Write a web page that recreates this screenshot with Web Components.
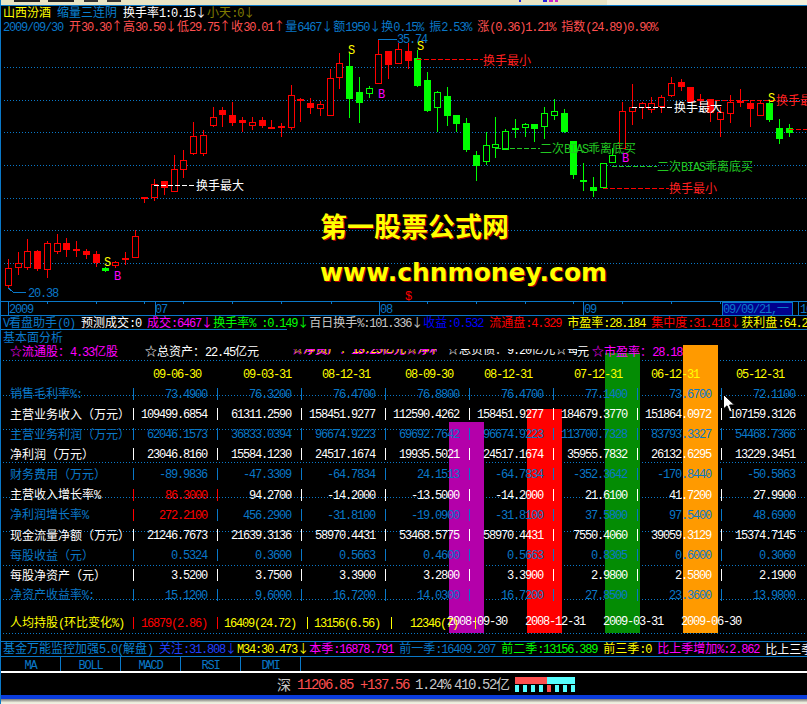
<!DOCTYPE html>
<html lang="zh">
<head>
<meta charset="utf-8">
<title>山西汾酒</title>
<style>
  html, body { margin: 0; background: #000; }
</style>
</head>
<body>
<tdx-app>
  <top-strip></top-strip>
  <kline-chart>
    <tick-bar>
      <tick-run color="#ffff00">山西汾酒 </tick-run>
      <tick-run color="#0a82d2">缩量三连阴 </tick-run>
      <tick-run color="#ffffff">换手率1:0.15↓</tick-run>
      <tick-run color="#807c00">小天:0↓</tick-run>
    </tick-bar>
    <tick-bar>
      <tick-run color="#0a78c8">2009/09/30 </tick-run>
      <tick-run color="#ff5050">开30.30↑高30.50↓低29.75↑收30.01↑</tick-run>
      <tick-run color="#0a78c8">量6467↓额1950↓换0.15% 振2.53% </tick-run>
      <tick-run color="#ff5050">涨(0.36)1.21% 指数(24.89)0.90%</tick-run>
    </tick-bar>
  </kline-chart>
  <tick-bar style="height:13px">
    <tick-run color="#0a78c8">V看盘助手(0) </tick-run>
    <tick-run color="#ffffff">预测成交:0 </tick-run>
    <tick-run color="#ff00ff">成交:6467↓</tick-run>
    <tick-run color="#00ff00">换手率% :0.149↓</tick-run>
    <tick-run color="#c8c8c8">百日换手%:101.336↓</tick-run>
    <tick-run color="#0000ff">收益:0.532 </tick-run>
    <tick-run color="#ff0000">流通盘:4.329 </tick-run>
    <tick-run color="#ffff00">市盈率:28.184 </tick-run>
    <tick-run color="#ff0000">集中度:31.418↓</tick-run>
    <tick-run color="#ffff00">获利盘:64.2</tick-run>
  </tick-bar>
  <split-rule></split-rule>
  <fund-panel></fund-panel>
  <tick-bar style="height:14px;border-top:1px solid #0a78c8;border-bottom:1px solid #0a78c8">
    <tick-run color="#0a82d2">基金万能监控加强5.0(解盘) </tick-run>
    <tick-run color="#2040ff">关注:31.808↓</tick-run>
    <tick-run color="#ffff00">M34:30.473↓</tick-run>
    <tick-run color="#ff00ff">本季:16878.791 </tick-run>
    <tick-run color="#0a78c8">前一季:16409.207 </tick-run>
    <tick-run color="#00ff00">前二季:13156.389 </tick-run>
    <tick-run color="#ffff00">前三季:0 </tick-run>
    <tick-run color="#ff00ff">比上季增加%:2.862 </tick-run>
    <tick-run color="#ffffff">比上三季</tick-run>
  </tick-bar>
  <tab-strip></tab-strip>
  <index-bar></index-bar>
</tdx-app>

<script>
const TEXT_CSS = `
  .a { font-family: "Liberation Mono", monospace; letter-spacing: -.1em; white-space: pre; }
`;
const FONT = `font: 12px/14px "Noto Sans CJK SC", sans-serif; white-space: nowrap;`;

// latin runs get the half-width mono face, the rest stays on the CJK face
function mono(text) {
  return text.replace(/[\x20-\x7e]+/g, (m) => `<span class="a">${m}</span>`);
}

const BLUE = "#0a78c8";

class TdxApp extends HTMLElement {
  constructor() {
    super();
    this.attachShadow({ mode: "open" }).innerHTML = `
      <style>
        :host { display: flex; flex-direction: column; width: 807px; height: 704px; overflow: hidden; background: #000; border-left: 1px solid ${BLUE}; box-sizing: border-box; }
        ::slotted(*) { flex: none; }
      </style>
      <slot></slot>`;
  }
}

class TopStrip extends HTMLElement {
  constructor() {
    super();
    const bits = [[14, 26, "#222"], [48, 26, "#222"], [84, 14, "#333"], [107, 14, "#333"], [519, 2, "#2222dd"], [543, 4, "#2222dd"], [549, 4, "#cc22cc"], [555, 3, "#cc22cc"]];
    this.attachShadow({ mode: "open" }).innerHTML = `
      <style>
        :host { display: block; height: 5px; margin-left: -1px; background: linear-gradient(90deg, #e8e4c4 0, #e8e4c4 607px, #f2f0dc 607px); border-bottom: 1px solid ${BLUE}; position: relative; }
        i { position: absolute; top: 0; height: 2px; }
      </style>
      ${bits.map(([x, w, c]) => `<i style="left:${x}px;width:${w}px;background:${c}"></i>`).join("")}`;
  }
}

class TickRun extends HTMLElement {
  connectedCallback() {
    if (this.shadowRoot) return;
    const color = this.getAttribute("color");
    this.attachShadow({ mode: "open" }).innerHTML = `
      <style>
        :host { display: block; flex: none; color: ${color}; ${FONT} }
        ${TEXT_CSS}
      </style>
      ${mono(this.textContent)}`;
  }
}

class TickBar extends HTMLElement {
  constructor() {
    super();
    this.attachShadow({ mode: "open" }).innerHTML = `
      <style>
        :host { display: flex; height: 14px; padding-left: 2px; overflow: hidden; align-items: center; position: relative; }
      </style>
      <slot></slot>`;
  }
}

// x, high, low, body top, body bottom, colour, filled
const CANDLES = [
  [8,259,288,268,285,"r",0],[18,252,275,263,267,"r",0],[27,239,270,251,267,"r",0],[37,250,271,251,268,"r",1],
  [47,241,278,243,269,"r",0],[57,234,254,243,251,"r",0],[66,238,257,243,249,"r",1],[76,241,257,249,250,"r",1],
  [86,249,259,251,254,"r",1],[96,251,267,254,262,"r",1],[105,267,272,268,270,"g",1],[115,261,268,262,265,"r",0],
  [125,252,265,258,259,"r",1],[135,230,257,236,257,"r",0],[144,197,203,197,198,"r",1],[154,179,201,184,197,"r",0],
  [164,181,195,181,187,"r",1],[174,155,191,169,191,"r",0],[183,150,178,160,169,"r",0],[193,122,155,136,153,"r",0],
  [203,130,156,135,153,"r",0],[213,107,127,117,125,"r",0],[222,107,127,110,114,"r",1],[232,102,126,115,122,"r",1],
  [242,117,132,120,122,"r",1],[252,117,130,122,125,"r",0],[262,117,128,120,125,"r",1],[271,120,129,127,128,"r",1],
  [281,123,137,126,127,"r",1],[291,85,130,95,127,"r",0],[300,98,122,99,100,"r",1],[310,98,114,103,107,"r",1],
  [320,101,116,104,108,"r",0],[330,69,115,78,115,"r",0],[339,53,89,63,77,"r",0],[349,53,118,66,98,"g",1],
  [359,77,123,92,102,"g",1],[369,86,98,88,93,"g",0],[378,39,83,54,83,"r",0],[388,51,79,51,64,"r",1],
  [398,43,63,49,63,"r",0],[408,43,69,51,60,"r",1],[417,50,87,58,85,"g",1],[427,72,112,80,110,"g",1],
  [437,91,132,92,107,"g",0],[447,87,126,96,115,"g",1],[456,115,132,115,123,"g",1],[466,118,152,123,149,"g",1],
  [476,151,181,155,165,"g",1],[486,132,165,145,161,"g",0],[495,117,158,144,147,"g",0],[505,129,150,131,149,"g",0],
  [515,119,138,128,129,"g",1],[525,123,137,124,127,"g",0],[534,124,142,124,128,"g",1],[544,107,139,113,126,"g",0],
  [554,99,120,111,115,"g",0],[564,109,133,113,131,"g",1],[573,141,179,141,174,"g",1],[583,163,191,180,181,"g",1],
  [593,177,197,187,190,"g",1],[603,163,187,163,187,"g",0],[612,148,162,155,162,"g",0],[622,102,148,111,148,"r",0],
  [632,84,125,107,111,"r",0],[642,102,119,103,107,"r",0],[651,97,113,103,109,"r",0],[661,95,113,97,106,"r",0],
  [671,77,97,83,95,"r",0],[681,79,91,82,86,"r",1],[690,87,102,87,101,"r",1],[700,94,107,99,100,"r",1],
  [710,99,122,99,112,"r",1],[720,107,137,112,119,"r",0],[730,95,123,102,113,"r",0],[740,89,107,101,102,"r",1],
  [750,100,127,103,108,"r",1],[760,100,115,103,115,"r",0],[769,100,122,103,119,"g",1],[779,119,144,128,138,"g",1],
  [789,124,137,128,132,"g",1],
];

const DASHES = [
  [154,196,185,"#ffffff"],[417,483,59,"#ff0000"],[632,674,107,"#ffffff"],[715,776,100,"#ff0000"],
  [789,807,129,"#ff0000"],[496,540,148,"#22c822"],[612,657,166,"#22c822"],[603,669,188,"#ff0000"],
];

// x, y centre, text, colour
const LABELS = [
  [196,185,"换手最大","#fff"],[483,60,"换手最小","#ff2020"],[674,107,"换手最大","#fff"],[776,100,"换手最大","#ff2020"],
  [540,148,"二次BIAS乖离底买","#22c822"],[657,166,"二次BIAS乖离底买","#22c822"],[669,188,"换手最小","#ff2020"],
  [397,38,"35.74",BLUE],[28,292,"20.38",BLUE],
  [348,49,"S","#ffff00"],[378,93,"B","#ff00ff"],[417,45,"S","#ffff00"],[768,97,"S","#ffff00"],
  [622,157,"B","#ff00ff"],[104,261,"S","#ffff00"],[114,275,"B","#ff00ff"],[405,295,"$","#ff0000"],
  [9,308,"2009",BLUE],[155,308,"07",BLUE],[380,308,"08",BLUE],[584,308,"09",BLUE],[723,308,"09/09/21,一",BLUE],[800,308,"10",BLUE],
];

class KlineChart extends HTMLElement {
  constructor() {
    super();
    const grid = [67, 100, 132, 165, 198, 230, 263]
      .map((y) => `<line x1="4" x2="807" y1="${y + .5}" y2="${y + .5}" stroke="${BLUE}" stroke-dasharray="1 2"/>`).join("");
    const candles = CANDLES.map(([x, hi, lo, top, bot, c, fill]) => {
      const col = c === "r" ? "#ff0000" : "#00ff00";
      return `<path d="M${x + .5} ${hi}V${lo}" stroke="${col}"/>` +
        `<rect x="${x - 3 + .5}" y="${top + .5}" width="6" height="${bot - top}" stroke="${col}" fill="${fill ? col : "#000"}"/>`;
    }).join("");
    const dashes = DASHES.map(([a, b, y, c]) =>
      `<line x1="${a}" x2="${b}" y1="${y + .5}" y2="${y + .5}" stroke="${c}" stroke-dasharray="5 2"/>`).join("");
    const longTicks = [8, 155, 379, 583, 798];
    const ticks = [47, 96, 144, 183, 232, 281, 331, 427, 476, 525, 573, 622, 671, 720]
      .map((x) => `<path d="M${x + .5} 301v3" stroke="${BLUE}"/>`).join("") +
      longTicks.map((x) => `<path d="M${x + .5} 301v14" stroke="${BLUE}"/>`).join("");
    const labels = LABELS.map(([x, y, t, c]) =>
      `<span class="lb" style="left:${x - 1}px;top:${y - 13}px;color:${c}">${mono(t)}</span>`).join("");

    this.attachShadow({ mode: "open" }).innerHTML = `
      <style>
        :host { display: block; position: relative; height: 310px; flex: none; ${FONT} }
        svg { position: absolute; left: -1px; top: 0; width: 807px; height: 310px; }
        .lb { position: absolute; }
        .box { position: absolute; left: 721px; top: 296px; width: 69px; height: 12px; background: #00008c; border: 1px solid ${BLUE}; }
        .wm { position: absolute; color: #ffff00; text-shadow: 1px 1px 0 #b00000; white-space: nowrap; }
        .w1 { left: 319px; top: 202px; font: 700 27px/36px "Noto Sans CJK SC", sans-serif; }
        .w2 { left: 319px; top: 249px; font: 700 25px/36px "DejaVu Sans", sans-serif; }
        ${TEXT_CSS}
      </style>
      <svg viewBox="0 6 807 310" shape-rendering="crispEdges">
        ${grid}
        ${candles}
        ${dashes}
        <path d="M8 288l4 3 1 1h13" stroke="${BLUE}" fill="none"/>
        <path d="M378 40l8-1h11" stroke="${BLUE}" fill="none"/>
        <path d="M0 301.5H807" stroke="${BLUE}"/>
        ${ticks}
        <path d="M0 315.5H807" stroke="${BLUE}"/>
      </svg>
      <div class="box"></div>
      ${labels}
      <div class="wm w1">第一股票公式网</div>
      <div class="wm w2">www.chnmoney.com</div>
      <slot></slot>`;
  }
}

class SplitRule extends HTMLElement {
  constructor() {
    super();
    this.attachShadow({ mode: "open" }).innerHTML = `
      <style>
        :host { display: flex; height: 1px; margin-left: -1px; flex: none; }
        i { width: 287px; background: ${BLUE}; }
        u { margin-left: auto; width: 234px; background: ${BLUE}; }
      </style>
      <i></i><u></u>`;
  }
}

const DATE_HEADS = [["09-06-30",20],["09-03-31",26],["08-12-31",21],["08-09-30",20],["08-12-31",15],["07-12-31",21],["06-12-31",14],["05-12-31",15]];

const FUND_ROWS = [
  ["销售毛利率%:", BLUE, ["73.4900","76.3200","76.4700","76.8800","76.4700","77.1400","73.6700","72.1100"]],
  ["主营业务收入（万元）", "#fff", ["109499.6854","61311.2590","158451.9277","112590.4262","158451.9277","184679.3770","151864.0972","107159.3126"]],
  ["主营业务利润（万元）", BLUE, ["62046.1573","36833.0394","96674.9223","69692.7642","96674.9223","113700.7328","83793.3327","54468.7366"]],
  ["净利润（万元）", "#fff", ["23046.8160","15584.1230","24517.1674","19935.5021","24517.1674","35955.7832","26132.6295","13229.3451"]],
  ["财务费用（万元）", BLUE, ["-89.9836","-47.3309","-64.7834","24.1513","-64.7834","-352.3642","-170.8440","-50.5863"]],
  ["主营收入增长率%", "#fff", ["86.3000","94.2700","-14.2000","-13.5000","-14.2000","21.6100","41.7200","27.9900"], "#ff0000", 2],
  ["净利润增长率%", BLUE, ["272.2100","456.2900","-31.8100","-19.0900","-31.8100","37.5800","97.5400","48.6900"], "#ff0000", 1],
  ["现金流量净额（万元）", "#fff", ["21246.7673","21639.3136","58970.4431","53468.5775","58970.4431","7550.4060","39059.3129","15374.7145"]],
  ["每股收益（元）", BLUE, ["0.5324","0.3600","0.5663","0.4600","0.5663","0.8305","0.6000","0.3060"]],
  ["每股净资产（元）", "#fff", ["3.5200","3.7500","3.3900","3.2800","3.3900","2.9800","2.5800","2.1900"]],
  ["净资产收益率%:", BLUE, ["15.1200","9.6000","16.7200","14.0300","16.7200","27.8500","23.3600","13.9800"]],
];

const HOLD_ROW = [["16879(2.86)", 84, 10, "#ff0000", "#ff0000"], ["16409(24.72)", 90, 11, "#ffff00", "#ff0000"], ["13156(6.56)", 84, 11, "#ffff00", "#ffff00"], ["12346(7)", 84, 17, "#ffff00", "#ffff00"]];

// x, top, colour and the quarter it is dated with
const QUARTERS = [[448,422,"#b400aa","2008-09-30"],[526,409,"#ff0000","2008-12-31"],[604,353,"#048c04","2009-03-31"],[682,345,"#ff9a00","2009-06-30"]];

class FundPanel extends HTMLElement {
  constructor() {
    super();
    const dots = [360, 395, 429, 462, 497, 531, 565, 599, 633]
      .map((y) => `<line x1="3" x2="807" y1="${y - 330 + .5}" y2="${y - 330 + .5}" stroke="${BLUE}" stroke-dasharray="1 2"/>`).join("");
    const bars = QUARTERS.map(([x, top, c, d]) => `
      <div class="bar" style="left:${x}px;top:${top - 330}px;background:${c}"></div>
      <div class="qd" style="left:${x - 2}px">${mono(d)}</div>`).join("");
    const heads = DATE_HEADS.map(([d, p]) => `<div style="padding-left:${p}px">${mono(d)}</div>`).join("");
    const rows = FUND_ROWS.map(([name, color, vals, hot, hotSeps]) => `
      <div class="name" style="color:${color}">${mono(name)}</div>
      ${vals.map((v, i) => {
        const vc = hot && i === 0 ? hot : color;
        const sc = hot && i < hotSeps ? hot : color;
        return `<div class="cell" style="color:${vc}"><i style="background:${sc}"></i><span>${mono(v)}</span></div>`;
      }).join("")}`).join("");
    const hold = HOLD_ROW.map(([v, w, pad, color, sep]) => `
      <div class="hc" style="width:${w}px;padding-right:${pad}px;color:${color}"><i style="background:${sep}"></i><span>${mono(v)}</span></div>`).join("");

    this.attachShadow({ mode: "open" }).innerHTML = `
      <style>
        :host { display: block; position: relative; height: 311px; flex: none; overflow: hidden; ${FONT} }
        svg { position: absolute; left: -1px; top: 0; width: 807px; height: 311px; }
        .bar { position: absolute; width: 35px; bottom: 8px; }
        .qd { position: absolute; top: 283px; color: #fff; }
        .content { position: relative; display: flex; flex-direction: column; }
        .title { height: 14px; padding-left: 2px; color: ${BLUE}; }
        .assets { height: 15px; display: flex; align-items: flex-start; }
        .slice { width: 146px; height: 6px; overflow: hidden; margin-top: 5px; }
        .slice div { margin-top: -7px; }
        .heads { display: grid; grid-template-columns: repeat(8, 84px); margin: 7px 0 4px 132px; color: #ffff00; height: 14px; }
        .table { display: grid; grid-template-columns: 132px repeat(8, 84px); grid-auto-rows: 20.1px; }
        .name { padding-left: 9px; align-self: center; }
        .cell { display: flex; align-items: center; justify-content: space-between; padding-right: 10px; }
        .cell i, .hc i { width: 1px; height: 12px; flex: none; }
        .hold { display: flex; align-items: center; height: 14px; margin-top: 11px; }
        .hold .name { width: 123px; color: #ffff00; }
        .hc { display: flex; align-items: center; justify-content: space-between; box-sizing: border-box; }
        .end { width: 1px; height: 12px; background: #ffff00; }
        cursor-mark { position: absolute; left: 722px; top: 64px; }
        ${TEXT_CSS}
      </style>
      <svg viewBox="0 0 807 311" shape-rendering="crispEdges">${dots}</svg>
      ${bars}
      <div class="content">
        <div class="title">${mono("基本面分析")}</div>
        <div class="assets">
          <span style="margin-left:9px;color:#ff00ff">${mono("☆流通股：4.33亿股")}</span>
          <span style="margin-left:27px;color:#fff">${mono("☆总资产：22.45亿元")}</span>
          <div class="slice" style="margin-left:32px;color:#ff00ff;text-shadow:1px -1px 0 #ffff00"><div>${mono("☆净资产：13.25亿元☆净利")}</div></div>
          <div class="slice" style="margin-left:10px;width:130px;color:#fff"><div>${mono("☆总负债：9.20亿元☆每股")}</div></div>
          <span style="color:#fff">元</span>
          <span style="margin-left:3px;color:#ff00ff">${mono("☆市盈率：28.18")}</span>
        </div>
        <div class="heads">${heads}</div>
        <div class="table">${rows}</div>
        <div class="hold">
          <div class="name">${mono("人均持股(环比变化%)")}</div>
          ${hold}
          <div class="end"></div>
        </div>
      </div>
      <cursor-mark></cursor-mark>`;
  }
}

class CursorMark extends HTMLElement {
  constructor() {
    super();
    this.attachShadow({ mode: "open" }).innerHTML = `
      <style>:host { display: block; width: 12px; height: 19px; }</style>
      <svg width="12" height="19" viewBox="0 0 12 19">
        <path d="M.5 .5V15l3.5-3.2L6.600 18l2.600-1.100L6.600 11H11.500Z" fill="#fff" stroke="#000"/>
      </svg>`;
  }
}

class TabStrip extends HTMLElement {
  constructor() {
    super();
    const tabs = ["MA", "BOLL", "MACD", "RSI", "DMI"].map((t) => `<div>${mono(t)}</div>`).join("");
    this.attachShadow({ mode: "open" }).innerHTML = `
      <style>
        :host { display: grid; grid-template-columns: repeat(5, 60px); justify-content: start; height: 14px; flex: none; color: ${BLUE}; ${FONT} }
        div { border-right: 1px solid ${BLUE}; text-align: center; }
        ${TEXT_CSS}
      </style>
      ${tabs}`;
  }
}

class VolMeter extends HTMLElement {
  constructor() {
    super();
    const cells = [0, 1, 2, 3, 4, 5, 6, 7].map((i) => `<i style="background:${i === 4 ? "#ff5050" : "#55ffff"}"></i>`).join("");
    this.attachShadow({ mode: "open" }).innerHTML = `
      <style>
        :host { display: grid; grid-template-columns: 32px 28px; grid-template-rows: 7px 7px; row-gap: 1px; width: 60px; flex: none; }
        .hi { background: #ff5050; }
        .lo { background: #55ffff; }
        .steps { grid-column: 1 / 3; display: flex; gap: 4px; }
        i { width: 4px; }
      </style>
      <div class="hi"></div><div class="lo"></div>
      <div class="steps">${cells}</div>`;
  }
}

class IndexBar extends HTMLElement {
  constructor() {
    super();
    this.attachShadow({ mode: "open" }).innerHTML = `
      <style>
        :host { display: block; margin-left: -1px; flex: 1; font: 14px/18px "Noto Sans CJK SC", sans-serif; white-space: nowrap; }
        .rule { height: 2px; background: #fff; }
        .line { height: 22px; display: flex; align-items: center; background: #000; color: #c8c8c8; }
        .up { color: #ff5050; }
        .edge { height: 4px; background: #0a3cdc; }
        .shade { height: 6px; background: linear-gradient(#777, #eeeedd 60%, #f2f2e8); }
        ${TEXT_CSS}
      </style>
      <div class="rule"></div>
      <div class="line">
        <span style="margin-left:277px">深</span>
        <span class="up" style="margin-left:6px">${mono("11206.85")}</span>
        <span class="up" style="margin-left:7px">${mono("+137.56")}</span>
        <span style="margin-left:6px">${mono("1.24%")}</span>
        <span style="margin-left:4px">${mono("410.52亿")}</span>
        <vol-meter style="margin-left:5px"></vol-meter>
      </div>
      <div class="edge"></div>
      <div class="shade"></div>`;
  }
}

customElements.define("tdx-app", TdxApp);
customElements.define("top-strip", TopStrip);
customElements.define("tick-run", TickRun);
customElements.define("tick-bar", TickBar);
customElements.define("kline-chart", KlineChart);
customElements.define("split-rule", SplitRule);
customElements.define("cursor-mark", CursorMark);
customElements.define("fund-panel", FundPanel);
customElements.define("tab-strip", TabStrip);
customElements.define("vol-meter", VolMeter);
customElements.define("index-bar", IndexBar);
</script>
</body>
</html>
